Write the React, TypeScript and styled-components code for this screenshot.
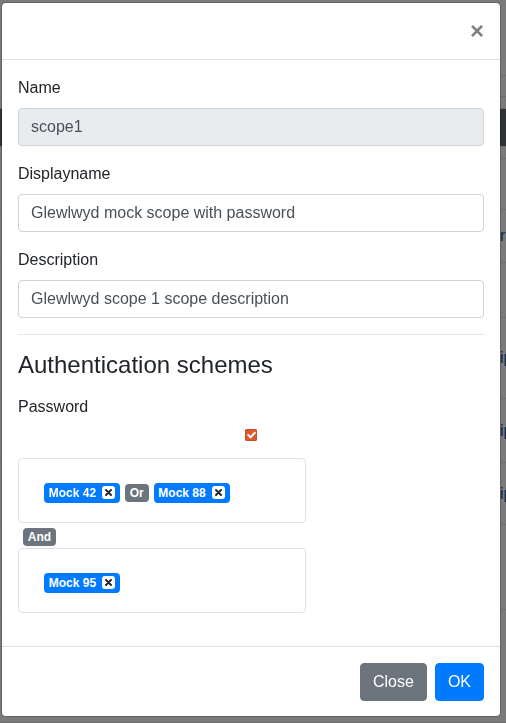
import { createGlobalStyle, styled } from "styled-components";

const GlobalStyle = createGlobalStyle`
  * {
    box-sizing: border-box;
  }
  body {
    margin: 0;
    font-family: "Liberation Sans", Arial, sans-serif;
    font-size: 16px;
    line-height: 1.5;
    color: #212529;
    background: #f5f5f5;
    overflow: hidden;
  }
`;

type PageRowData = {
  height: number;
  dark?: boolean;
  text?: string;
};

// rows of the page that lies behind the modal
const pageRows: PageRowData[] = [
  { height: 76 },
  { height: 21 },
  { height: 12 },
  { height: 38, dark: true },
  { height: 12 },
  { height: 51 },
  { height: 53, text: "rant" },
  { height: 55 },
  { height: 81, text: "ip" },
  { height: 64, text: "ip" },
  { height: 62, text: "ip" },
  { height: 85 },
  { height: 113 },
];

const App = () => {
  return (
    <>
      <GlobalStyle />
      <Page>
        {pageRows.map((row, i) => (
          <PageRow key={i} $height={row.height} $dark={row.dark}>
            {row.text && <PageLink>{row.text}</PageLink>}
          </PageRow>
        ))}
      </Page>
      <Backdrop />
      <Dialog>
        <Content>
          <Header>
            <CloseButton type="button" aria-label="Close">
              ×
            </CloseButton>
          </Header>
          <Body>
            <FormGroup>
              <Label>Name</Label>
              <Input readOnly defaultValue="scope1" />
            </FormGroup>
            <FormGroup>
              <Label>Displayname</Label>
              <Input defaultValue="Glewlwyd mock scope with password" />
            </FormGroup>
            <FormGroup>
              <Label>Description</Label>
              <Input defaultValue="Glewlwyd scope 1 scope description" />
            </FormGroup>
            <Divider />
            <SectionTitle>Authentication schemes</SectionTitle>
            <Label>Password</Label>
            <CheckRow>
              <CheckBox type="checkbox" defaultChecked />
            </CheckRow>
            <SchemeBox>
              <SchemeBadge name="Mock 42" />
              <Badge $tone="secondary">Or</Badge>
              <SchemeBadge name="Mock 88" />
            </SchemeBox>
            <AndRow>
              <Badge $tone="secondary">And</Badge>
            </AndRow>
            <SchemeBox $last>
              <SchemeBadge name="Mock 95" />
            </SchemeBox>
          </Body>
          <Footer>
            <Button $tone="secondary">Close</Button>
            <Button $tone="primary">OK</Button>
          </Footer>
        </Content>
      </Dialog>
    </>
  );
};

export default App;

const SchemeBadge = ({ name }: { name: string }) => {
  return (
    <Badge $tone="primary" $removable>
      {name}
      <RemoveButton type="button" aria-label="Remove">
        <svg width="7" height="7" viewBox="0 0 7 7">
          <path
            d="M1 1 L6 6 M6 1 L1 6"
            stroke="#212529"
            strokeWidth="1.9"
            strokeLinecap="round"
          />
        </svg>
      </RemoveButton>
    </Badge>
  );
};

const tones = {
  primary: "#007bff",
  secondary: "#6c757d",
};

const Page = styled.div`
  width: 100%;
  height: 723px;
  overflow: hidden;
`;

const PageRow = styled.div<{ $height: number; $dark?: boolean }>`
  height: ${(p) => p.$height}px;
  display: flex;
  align-items: center;
  padding-left: 500px;
  border-bottom: 1px solid #dcdcdc;
  background: ${(p) => (p.$dark ? "#5e666e" : "#f5f5f5")};
  white-space: nowrap;
  overflow: hidden;
`;

const PageLink = styled.span`
  color: #0a4fa0;
  font-size: 16px;
`;

const Backdrop = styled.div`
  position: fixed;
  inset: 0;
  background: rgba(0, 0, 0, 0.5);
`;

const Dialog = styled.div`
  position: fixed;
  top: 2px;
  left: 1px;
  width: 500px;
`;

const Content = styled.div`
  display: flex;
  flex-direction: column;
  background: #fff;
  border: 1px solid rgba(0, 0, 0, 0.2);
  border-radius: 4.8px;
  background-clip: padding-box;
`;

const Header = styled.div`
  display: flex;
  justify-content: flex-end;
  padding: 16px;
  border-bottom: 1px solid #dee2e6;
`;

const CloseButton = styled.button`
  padding: 0;
  border: 0;
  background: transparent;
  font-family: inherit;
  font-size: 24px;
  font-weight: 700;
  line-height: 1;
  color: #000;
  opacity: 0.5;
  text-shadow: 0 1px 0 #fff;
  cursor: pointer;
`;

const Body = styled.div`
  padding: 16px;
`;

const FormGroup = styled.div`
  margin-bottom: 16px;
`;

const Label = styled.label`
  display: block;
  margin-bottom: 8px;
  font-size: 16px;
  line-height: 24px;
  color: #212529;
`;

const Input = styled.input`
  display: block;
  width: 100%;
  height: 38px;
  padding: 6px 12px;
  font-family: inherit;
  font-size: 16px;
  line-height: 1.5;
  color: #495057;
  background: #fff;
  border: 1px solid #ced4da;
  border-radius: 4px;
  outline: none;

  &[readonly] {
    background: #e9ecef;
  }
`;

const Divider = styled.hr`
  margin: 0 0 16px;
  border: 0;
  border-top: 1px solid rgba(0, 0, 0, 0.1);
`;

const SectionTitle = styled.h4`
  margin: 0 0 15px;
  font-size: 24px;
  font-weight: 500;
  line-height: 1.2;
  color: #212529;
`;

const CheckRow = styled.div`
  display: flex;
  justify-content: center;
  margin: 10px 0 17px;
`;

const CheckBox = styled.input`
  appearance: none;
  position: relative;
  width: 12px;
  height: 12px;
  margin: 0;
  border-radius: 2px;
  background: #dd5a2b;
  box-shadow: inset 0 0 0 1px #c9502a;

  &::after {
    content: "";
    position: absolute;
    left: 4px;
    top: 1.5px;
    width: 3px;
    height: 6px;
    border: solid #fff;
    border-width: 0 2px 2px 0;
    transform: rotate(45deg);
  }
`;

const SchemeBox = styled.div<{ $last?: boolean }>`
  display: flex;
  align-items: center;
  gap: 5px;
  width: 288px;
  padding: 24px 24px 19px 25px;
  margin-bottom: ${(p) => (p.$last ? "17px" : "0")};
  border: 1px solid #dee2e6;
  border-radius: 4px;
`;

const Badge = styled.span<{ $tone: "primary" | "secondary"; $removable?: boolean }>`
  display: inline-flex;
  align-items: center;
  padding: ${(p) => (p.$removable ? "3.5px" : "3px")} 4.8px;
  font-size: 12px;
  font-weight: 700;
  line-height: 1;
  color: #fff;
  white-space: nowrap;
  border-radius: 4px;
  background: ${(p) => tones[p.$tone]};
`;

const RemoveButton = styled.button`
  display: inline-flex;
  align-items: center;
  justify-content: center;
  width: 13px;
  height: 13px;
  margin-left: 6px;
  padding: 0;
  border: 0;
  border-radius: 3px;
  background: #fff;
  cursor: pointer;
`;

const AndRow = styled.div`
  display: flex;
  margin: 5px 0 2px 5px;
`;

const Footer = styled.div`
  display: flex;
  justify-content: flex-end;
  gap: 8px;
  padding: 16px 16px 15px;
  border-top: 1px solid #dee2e6;
`;

const Button = styled.button<{ $tone: "primary" | "secondary" }>`
  padding: 6px 12px;
  font-family: inherit;
  font-size: 16px;
  line-height: 1.5;
  color: #fff;
  background: ${(p) => tones[p.$tone]};
  border: 1px solid ${(p) => tones[p.$tone]};
  border-radius: 4px;
  cursor: pointer;
`;
